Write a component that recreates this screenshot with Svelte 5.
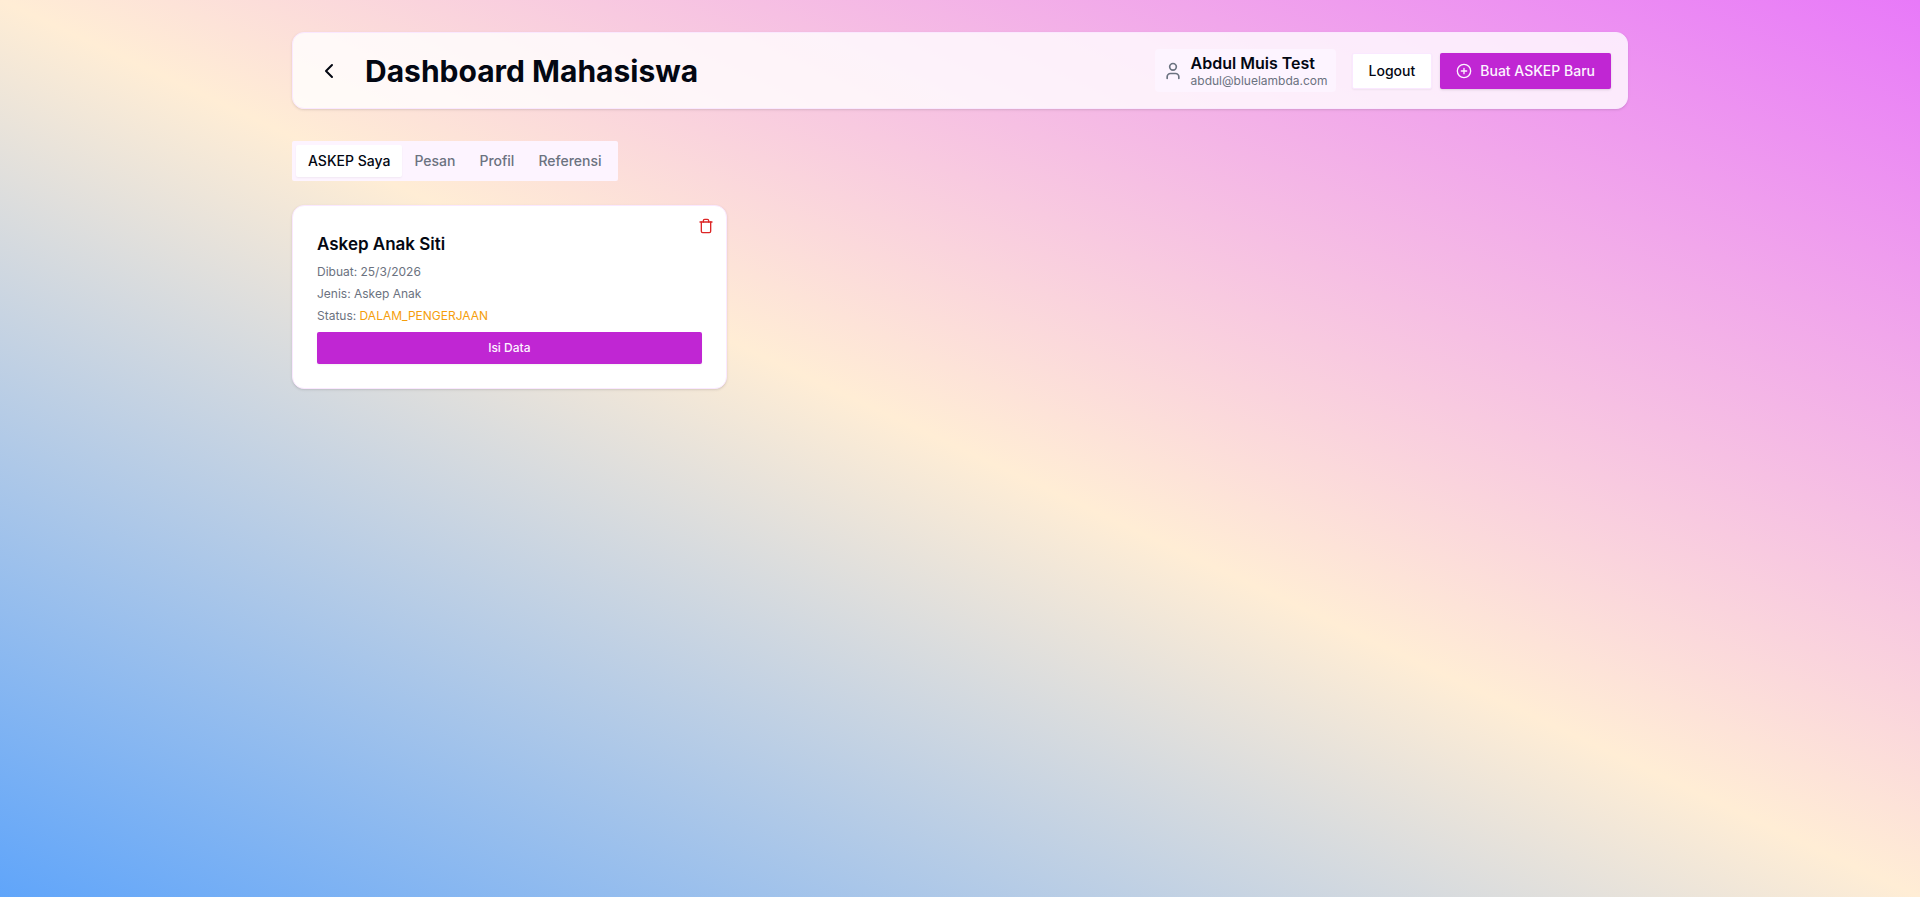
<script lang="ts">
	type Askep = {
		id: number;
		nama: string;
		dibuat: string;
		jenis: string;
		status: string;
	};

	const user = { name: 'Abdul Muis Test', email: 'abdul@bluelambda.com' };
	const tabs = ['ASKEP Saya', 'Pesan', 'Profil', 'Referensi'];

	let activeTab = $state('ASKEP Saya');
	let askepList = $state<Askep[]>([
		{
			id: 1,
			nama: 'Askep Anak Siti',
			dibuat: '25/3/2026',
			jenis: 'Askep Anak',
			status: 'DALAM_PENGERJAAN'
		}
	]);

	function hapus(id: number) {
		askepList = askepList.filter((askep) => askep.id !== id);
	}
</script>

<div class="page">
	<div class="container">
		<header>
			<div class="heading">
				<button class="back" aria-label="Kembali">
					<svg width="24" height="24" viewBox="0 0 24 24"><path d="m15 18-6-6 6-6" /></svg>
				</button>
				<h1>Dashboard Mahasiswa</h1>
			</div>
			<div class="actions">
				<div class="profile">
					<svg width="20" height="20" viewBox="0 0 24 24">
						<path d="M19 21v-2a4 4 0 0 0-4-4H9a4 4 0 0 0-4 4v2" />
						<circle cx="12" cy="7" r="4" />
					</svg>
					<div>
						<p class="name">{user.name}</p>
						<p class="email">{user.email}</p>
					</div>
				</div>
				<div class="buttons">
					<button class="outline">Logout</button>
					<button class="primary">
						<svg width="16" height="16" viewBox="0 0 24 24">
							<circle cx="12" cy="12" r="10" />
							<path d="M8 12h8M12 8v8" />
						</svg>
						Buat ASKEP Baru
					</button>
				</div>
			</div>
		</header>

		<div class="tabs" role="tablist">
			{#each tabs as tab}
				<button
					role="tab"
					class:active={tab === activeTab}
					aria-selected={tab === activeTab}
					onclick={() => (activeTab = tab)}
				>
					{tab}
				</button>
			{/each}
		</div>

		{#if activeTab === 'ASKEP Saya'}
			<div class="grid">
				{#each askepList as askep (askep.id)}
					<article class="card">
						<button class="delete" aria-label="Hapus" onclick={() => hapus(askep.id)}>
							<svg width="16" height="16" viewBox="0 0 24 24">
								<path d="M3 6h18" />
								<path d="M19 6v14c0 1-1 2-2 2H7c-1 0-2-1-2-2V6" />
								<path d="M8 6V4c0-1 1-2 2-2h4c1 0 2 1 2 2v2" />
							</svg>
						</button>
						<h3>{askep.nama}</h3>
						<div class="details">
							<p>Dibuat: {askep.dibuat}</p>
							<p>Jenis: {askep.jenis}</p>
							<p>Status: <span class="status">{askep.status}</span></p>
						</div>
						<button class="primary small">Isi Data</button>
					</article>
				{/each}
			</div>
		{/if}
	</div>
</div>

<style>
	:global(body) {
		margin: 0;
	}

	.page {
		min-height: 100vh;
		box-sizing: border-box;
		padding: 32px;
		background: linear-gradient(to top right, #60a5fa, #ffedd5, #e879f9);
		color: #030712;
		font-family: Inter, sans-serif;
		font-size: 14px;
		line-height: 20px;
	}

	.container {
		max-width: 1336px;
		margin: 0 auto;
	}

	h1,
	h3,
	p {
		margin: 0;
	}

	svg {
		fill: none;
		stroke: currentColor;
		stroke-width: 2;
		stroke-linecap: round;
		stroke-linejoin: round;
		flex-shrink: 0;
	}

	button {
		display: inline-flex;
		align-items: center;
		justify-content: center;
		gap: 8px;
		border: none;
		padding: 0;
		background: transparent;
		color: inherit;
		font: inherit;
		font-weight: 500;
		border-radius: 2px;
		cursor: pointer;
	}

	header {
		display: flex;
		justify-content: space-between;
		align-items: center;
		flex-wrap: wrap;
		gap: 16px;
		padding: 16px;
		margin-bottom: 32px;
		background: rgba(255, 255, 255, 0.8);
		border: 1px solid #fae8ff;
		border-radius: 12px;
		box-shadow: 0 1px 3px rgba(0, 0, 0, 0.1), 0 1px 2px -1px rgba(0, 0, 0, 0.1);
	}

	.heading,
	.actions {
		display: flex;
		align-items: center;
		gap: 16px;
	}

	.back {
		width: 40px;
		height: 36px;
	}

	h1 {
		font-size: 30px;
		line-height: 36px;
		font-weight: 700;
	}

	.profile {
		display: flex;
		align-items: center;
		gap: 8px;
		padding: 4px 8px;
		background: #fdf4ff;
		border-radius: 4px;
	}

	.profile svg {
		color: #6b7280;
	}

	.name {
		font-size: 16px;
		line-height: 20px;
		font-weight: 600;
	}

	.email {
		color: #6b7280;
		font-size: 12px;
		line-height: 15px;
	}

	.buttons {
		display: flex;
		align-items: center;
		gap: 8px;
	}

	.outline {
		height: 36px;
		padding: 0 16px;
		background: #fff;
		border: 1px solid #fae8ff;
		box-shadow: 0 1px 2px rgba(0, 0, 0, 0.05);
	}

	.primary {
		height: 36px;
		padding: 0 16px;
		background: #c026d3;
		color: #fdf4ff;
		box-shadow: 0 1px 3px rgba(0, 0, 0, 0.1), 0 1px 2px -1px rgba(0, 0, 0, 0.1);
	}

	.small {
		width: 100%;
		height: 32px;
		font-size: 12px;
		box-shadow: 0 1px 2px rgba(0, 0, 0, 0.05);
	}

	.tabs {
		display: inline-flex;
		padding: 4px;
		margin-bottom: 24px;
		background: #fdf4ff;
		border-radius: 2px;
		color: #6b7280;
	}

	.tabs button {
		height: 32px;
		padding: 0 12px;
	}

	.tabs .active {
		background: #fff;
		color: #030712;
		box-shadow: 0 1px 2px rgba(0, 0, 0, 0.05);
	}

	.grid {
		display: grid;
		grid-template-columns: repeat(auto-fill, minmax(400px, 1fr));
		gap: 16px;
	}

	.card {
		position: relative;
		padding: 24px;
		background: #fff;
		border: 1px solid #fae8ff;
		border-radius: 12px;
		box-shadow: 0 1px 3px rgba(0, 0, 0, 0.1), 0 1px 2px -1px rgba(0, 0, 0, 0.1);
	}

	.delete {
		position: absolute;
		top: 4px;
		right: 4px;
		width: 32px;
		height: 32px;
		color: #dc2626;
	}

	h3 {
		margin-bottom: 3px;
		font-size: 17px;
		line-height: 28px;
		font-weight: 600;
	}

	.details {
		color: #6b7280;
		font-size: 12px;
		line-height: 22px;
		margin-bottom: 5px;
	}

	.status {
		color: #f59e0b;
	}
</style>
